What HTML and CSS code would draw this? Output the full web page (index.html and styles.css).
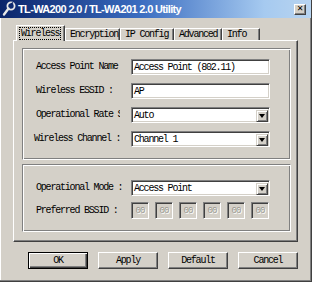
FILE: index.html
```html
<!DOCTYPE html>
<html>
<head>
<meta charset="utf-8">
<link rel="stylesheet" href="styles.css">
</head>
<body>
<div class="window">
  <div class="titlebar">
    <svg class="appicon" width="14" height="16" viewBox="0 0 14 16">
      <circle cx="9" cy="5" r="3.6" fill="none" stroke="#e8e8e8" stroke-width="1.8"/>
      <path d="M6.5 7.5 L2 13.5" stroke="#e8e8e8" stroke-width="2.4" stroke-linecap="round"/>
      <path d="M9 3.2 L11 1.5" stroke="#0a246a" stroke-width="1.4"/>
    </svg>
    <span class="title">TL-WA200 2.0 / TL-WA201 2.0 Utility</span>
    <span class="close">&#x2715;</span>
  </div>
  <div class="tabs">
    <div class="tab sel w-wireless"><span class="focus">Wireless</span></div>
    <div class="tab w-encryption">Encryption</div>
    <div class="tab w-ip">IP Config</div>
    <div class="tab w-adv">Advanced</div>
    <div class="tab w-info">Info</div>
  </div>
  <div class="panel">
    <div class="group g1">
      <div class="row"><span class="label">Access Point Name</span><div class="field">Access Point (802.11)</div></div>
      <div class="row"><span class="label">Wireless ESSID :</span><div class="field">AP</div></div>
      <div class="row"><span class="label clip">Operational Rate S</span><div class="field select"><span class="val">Auto</span><span class="drop"><span class="arrow"></span></span></div></div>
      <div class="row"><span class="label shift">Wireless Channel :</span><div class="field select"><span class="val">Channel 1</span><span class="drop"><span class="arrow"></span></span></div></div>
    </div>
    <div class="group g2">
      <div class="row"><span class="label">Operational Mode :</span><div class="field select"><span class="val">Access Point</span><span class="drop"><span class="arrow"></span></span></div></div>
      <div class="row bssid"><span class="label">Preferred BSSID :</span>
        <div class="boxes">
          <span class="box">00</span><span class="box">00</span><span class="box">00</span><span class="box">00</span><span class="box">00</span><span class="box">00</span>
        </div>
      </div>
    </div>
  </div>
  <div class="buttons">
    <div class="btn default"><span>OK</span></div>
    <div class="btn"><span>Apply</span></div>
    <div class="btn"><span>Default</span></div>
    <div class="btn"><span>Cancel</span></div>
  </div>
</div>
</body>
</html>
```
FILE: styles.css
```css
* { box-sizing: border-box; }
html, body { margin: 0; padding: 0; }
body {
  width: 312px; height: 282px; overflow: hidden;
  background: #d4d0c8;
  font-family: "Liberation Mono", monospace;
  font-size: 10px;
  letter-spacing: -1.2px;
  color: #000;
}
.window {
  width: 312px; height: 282px;
  background: #d4d0c8;
  border-right: 1px solid #404040;
  border-bottom: 1px solid #404040;
  box-shadow: inset -1px -1px #808080, inset 1px 0 #fff;
}
.titlebar {
  height: 18px;
  display: flex; align-items: center;
  padding: 0 4px 0 2px;
  background: linear-gradient(to right, #0a246a 0%, #3a6cc0 45%, #a6caf0 85%, #b8d4f0 100%);
}
.appicon { flex: none; }
.title {
  flex: 1;
  margin-left: 2px;
  font-family: "Liberation Sans", Arial, sans-serif;
  font-weight: bold;
  font-size: 11px;
  letter-spacing: -0.65px;
  color: #fff;
  white-space: nowrap;
}
.close {
  width: 12px; height: 11px;
  margin-right: 1px;
  display: flex; align-items: center; justify-content: center;
  background: #d4d0c8;
  border-top: 1px solid #fff; border-left: 1px solid #fff;
  border-right: 1px solid #404040; border-bottom: 1px solid #404040;
  box-shadow: inset -1px -1px #808080;
  font-family: "DejaVu Sans", sans-serif;
  font-size: 8px; font-weight: bold; letter-spacing: 0;
  line-height: 1;
}
.tabs {
  display: flex; align-items: flex-end;
  height: 22px;
  padding-left: 16px;
}
.tab {
  height: 12px;
  padding-left: 4px;
  line-height: 11px;
  border-top: 1px solid #fff;
  border-left: 1px solid #fff;
  border-right: 1px solid #404040;
  box-shadow: inset -1px 0 #808080;
  white-space: nowrap;
}
.tab.sel {
  height: 16px;
  margin-bottom: -1px;
  padding-left: 3px;
  padding-top: 2px;
  position: relative; z-index: 1;
  background: #d4d0c8;
}
.focus { outline: 1px dotted #000; outline-offset: 0; display: inline-block; line-height: 11px; padding: 0 1px; }
.w-wireless { width: 49px; }
.w-encryption { width: 55px; }
.w-ip { width: 54px; }
.w-adv { width: 48px; }
.w-info { width: 38px; }
.panel {
  margin: 0 13px 0 13px;
  height: 202px;
  padding: 7px 6px 8px 8px;
  border-top: 1px solid #fff;
  border-left: 1px solid #fff;
  border-right: 1px solid #404040;
  border-bottom: 1px solid #404040;
  box-shadow: inset -1px -1px #808080;
  display: flex; flex-direction: column; gap: 4px;
}
.group {
  border: 1px solid #808080;
  border-right-color: #fff; border-bottom-color: #fff;
  box-shadow: inset 1px 1px #fff, inset -1px -1px #808080;
  padding-left: 13px;
  display: flex; flex-direction: column;
}
.g1 { height: 112px; padding-top: 10px; gap: 8px; }
.g2 { height: 68px; padding-top: 15px; gap: 6px; }
.row { display: flex; align-items: center; height: 16px; }
.bssid { height: 17px; }
.label {
  width: 95px; flex: none;
  white-space: nowrap;
  line-height: 16px;
}
.label.clip { width: 84px; margin-right: 11px; overflow: hidden; }
.label.shift { margin-left: -2px; width: 97px; }
.field {
  width: 139px; height: 16px;
  background: #fff;
  border-top: 1px solid #808080; border-left: 1px solid #808080;
  border-right: 1px solid #fff; border-bottom: 1px solid #fff;
  box-shadow: inset 1px 1px #404040, inset -1px -1px #d4d0c8;
  padding: 1px 2px 0 2px;
  line-height: 13px;
  white-space: nowrap;
  display: flex; align-items: center;
}
.select .val { flex: 1; }
.drop {
  width: 12px; height: 12px;
  margin-right: -1px;
  background: #d4d0c8;
  border-top: 1px solid #d4d0c8; border-left: 1px solid #d4d0c8;
  border-right: 1px solid #404040; border-bottom: 1px solid #404040;
  box-shadow: inset 1px 1px #fff, inset -1px -1px #808080;
  display: flex; align-items: center; justify-content: center;
}
.arrow {
  width: 0; height: 0;
  border-left: 3px solid transparent; border-right: 3px solid transparent;
  border-top: 4px solid #000;
  margin-top: 1px;
}
.boxes { display: flex; gap: 6px; }
.box {
  width: 18px; height: 17px;
  border-top: 1px solid #808080; border-left: 1px solid #808080;
  border-right: 1px solid #fff; border-bottom: 1px solid #fff;
  box-shadow: inset 1px 1px #404040, inset -1px -1px #d4d0c8;
  color: #9a9890;
  text-shadow: 1px 1px #fff;
  display: flex; align-items: center; justify-content: center;
  font-size: 9px; letter-spacing: -1px;
}
.buttons {
  display: flex; gap: 10px;
  padding-left: 28px;
  margin-top: 10px;
}
.btn {
  width: 60px; height: 17px;
  border-top: 1px solid #fff; border-left: 1px solid #fff;
  border-right: 1px solid #404040; border-bottom: 1px solid #404040;
  box-shadow: inset -1px -1px #808080;
  display: flex; align-items: center; justify-content: center;
}
.btn.default {
  border: 1px solid #000;
  box-shadow: inset 1px 1px #fff, inset -1px -1px #404040, inset -2px -2px #808080;
}
```
